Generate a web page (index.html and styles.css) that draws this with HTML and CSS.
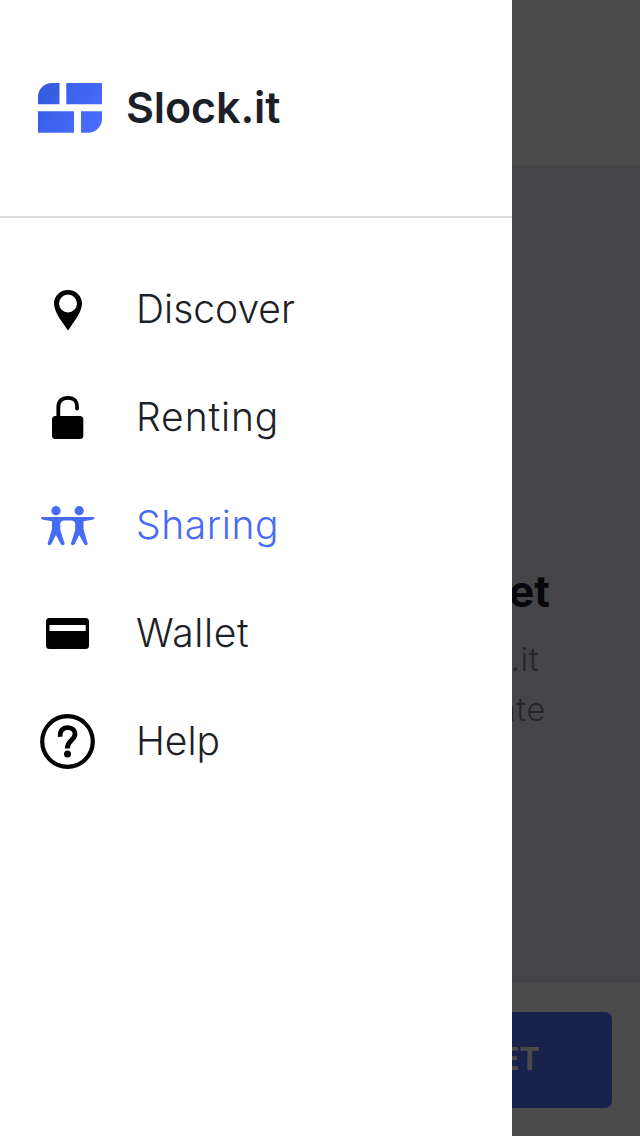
FILE: index.html
```
<!DOCTYPE html>
<html lang="en">
<head>
<meta charset="utf-8">
<title>Slock.it</title>
<link rel="stylesheet" href="styles.css">
</head>
<body>
<div class="app">
  <aside class="drawer">
    <header class="brand">
      <svg class="logo" viewBox="0 0 64 50">
        <defs><linearGradient id="g" gradientUnits="userSpaceOnUse" x1="0" y1="0" x2="50" y2="40"><stop offset="0" stop-color="#3259dc"/><stop offset="1" stop-color="#486bfc"/></linearGradient></defs>
        <path fill="url(#g)" d="M14 0H21.500V21.300H0V14A14 14 0 0 1 14 0ZM28.300 0H64V21.300H28.300ZM0 28.300H36V49.800H0ZM43 28.300H64V35.800A14 14 0 0 1 50 49.800H43Z"/>
      </svg>
      <span class="brand-name">Slock.it</span>
    </header>
    <nav class="menu">
      <a class="item discover"><svg class="icon" viewBox="0 0 56 56"><path fill-rule="evenodd" d="M28 8C20 8 14 14 14 21.500C14 31 24 42 27 47.300Q28 49 29 47.300C32 42 42 31 42 21.500C42 14 36 8 28 8ZM28 12.500A9 9 0 1 1 28 30.500A9 9 0 1 1 28 12.500Z"/></svg><span>Discover</span></a>
      <a class="item renting"><svg class="icon" viewBox="0 0 56 56"><rect x="12" y="26" width="31.300" height="23" rx="3.500"/><path d="M18.300 28V17.500C18.300 11.500 21.500 7.800 28 7.800C34.500 7.800 37 11.500 37 16V18.500" fill="none" stroke="currentColor" stroke-width="3.800" stroke-linecap="round"/></svg><span>Renting</span></a>
      <a class="item sharing"><svg class="icon" viewBox="0 0 56 56"><circle cx="16" cy="12.700" r="4.600"/><circle cx="39.200" cy="12.700" r="4.600"/><path d="M1.800 19H53.500Q55.500 20.200 53.500 21.500L43.500 23.200V31L47.800 46Q47 48 44.500 46.500L39.200 37L34.500 46.500Q32 48 30.800 46L35.200 32V26Q35.200 22.500 31 22.500H24.500Q20.300 22.500 20.300 26V32L24.700 46Q23.500 48 21 46.500L16 37L11 46.500Q8.500 48 7.500 46L12 31V23.200L2 21.500Q0 20.200 1.800 19Z"/></svg><span>Sharing</span></a>
      <a class="item wallet"><svg class="icon" viewBox="0 0 56 56"><path fill-rule="evenodd" d="M9.500 12H45.500Q49 12 49 15.500V39.500Q49 43 45.500 43H9.500Q6 43 6 39.500V15.500Q6 12 9.500 12ZM9.500 19V25H45.700V19Z"/></svg><span>Wallet</span></a>
      <a class="item help"><svg class="icon" viewBox="0 0 56 56"><g fill="none" stroke="currentColor"><circle cx="27.500" cy="27.500" r="25.300" stroke-width="4.200"/><path stroke-width="4.800" d="M20.300 22.800C19.500 16.500 23 13.700 27.700 13.700C32.500 13.700 35 16.500 35 20.300C35 26 27.300 26.500 27.300 34.500"/></g><circle cx="27.500" cy="40" r="3.500"/></svg><span>Help</span></a>
    </nav>
  </aside>
  <main class="page">
    <div class="page-bar"></div>
    <section class="page-body">
      <h1 class="title">et</h1>
      <p class="line first">.it</p>
      <p class="line second">ate</p>
    </section>
    <footer class="page-foot"><div class="button"><span>ET</span></div></footer>
  </main>
</div>
</body>
</html>
```
FILE: styles.css
```
* { box-sizing: border-box; }
body { margin: 0; font-family: Inter, "Liberation Sans", sans-serif; color: #1d1f28; background: #fff; }
.app { display: flex; width: 640px; height: 1136px; overflow: hidden; }
.drawer { width: 512px; flex: none; background: #fff; }
.brand { display: flex; align-items: center; height: 218px; padding-left: 38px; border-bottom: 2px solid #dcdcdc; }
.logo { width: 64px; height: 50px; flex: none; }
.brand-name { margin: 0 0 3px 24px; font-size: 43px; font-weight: 600; line-height: 50px; letter-spacing: -0.1px; white-space: nowrap; }
.menu { display: flex; flex-direction: column; padding-top: 38px; }
.item { display: flex; align-items: center; height: 108px; padding-left: 40px; font-size: 39px; font-weight: 350; white-space: nowrap; }
.item span { margin: 0 0 3px 40px; line-height: 48px; }
.renting span { letter-spacing: 0.9px; }
.sharing span { letter-spacing: 0.6px; }
.wallet span { letter-spacing: 0.6px; }
.icon { width: 56px; height: 56px; flex: none; fill: currentColor; color: #000; }
.sharing, .sharing .icon { color: #486bf5; }
.page { display: flex; flex-direction: column; width: 128px; overflow: hidden; background: #4b4b4b; }
.page-bar { height: 165px; flex: none; }
.page-body { display: flex; flex-direction: column; align-items: flex-end; height: 818px; flex: none; padding-top: 400px; background: #454547; }
.title { margin: 0 90px 0 0; font-size: 43px; font-weight: 700; line-height: 52px; color: #08080c; }
.line { margin: 0; font-size: 33px; font-weight: 350; line-height: 50px; letter-spacing: 0.5px; color: #25262b; }
.first { margin: 17px 101px 0 0; }
.second { margin-right: 94px; }
.page-foot { padding-top: 29px; }
.button { display: flex; align-items: center; justify-content: flex-end; width: 100px; height: 96px; padding: 0 72px 3px 0; border-radius: 0 7px 7px 0; background: #18224b; color: #4b4b4b; font-size: 31px; font-weight: 700; overflow: hidden; }
```
